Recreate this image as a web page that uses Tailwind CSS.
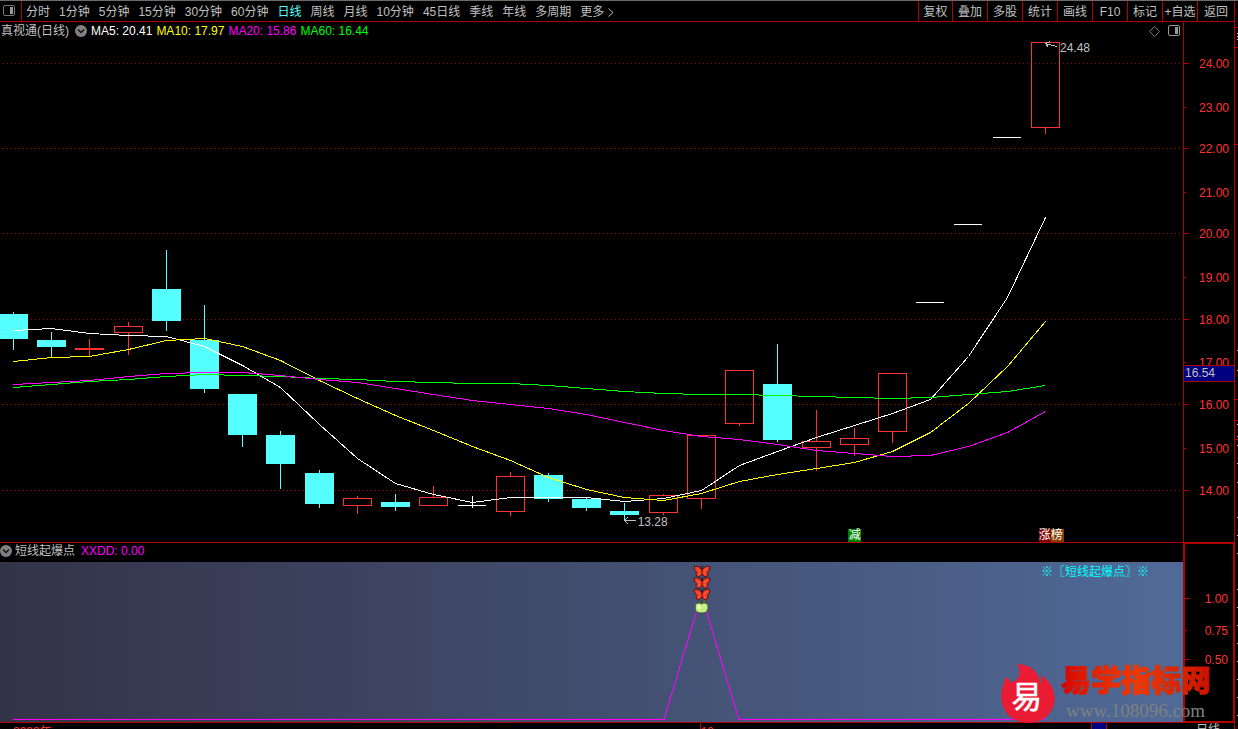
<!DOCTYPE html>
<html lang="zh-CN">
<head>
    <meta charset="UTF-8">
    <meta name="viewport" content="width=device-width, initial-scale=1.0">
    <title>真视通 日线</title>
    <script src="https://cdn.jsdelivr.net/npm/@tailwindcss/browser@4"></script>
</head>
<body class="bg-black text-[#c0c0c0] text-[12px] leading-[14px] font-['Liberation_Sans','Noto_Sans_CJK_SC',sans-serif]">
<div class="relative h-screen flex overflow-hidden border-t border-[#6b6b6b]">
    <div class="flex-1 min-w-0 flex flex-col">

        <!-- toolbar -->
        <header class="h-[21px] shrink-0 flex items-stretch border-b border-[#b00000] whitespace-nowrap">
            <button class="w-[22px] shrink-0 border-r border-[#b00000] flex items-center pl-[3px]" aria-label="面板">
                <svg class="w-3 h-3" viewBox="0 0 12 12" fill="none"><rect x="0.5" y="0.5" width="11" height="10" rx="1.5" stroke="#777"/><rect x="7" y="2" width="3" height="7" fill="#999"/></svg>
            </button>
            <nav class="flex-1 flex items-center gap-[9px] pl-1 pt-[2px]">
                <button>分时</button>
                <button>1分钟</button>
                <button>5分钟</button>
                <button>15分钟</button>
                <button>30分钟</button>
                <button>60分钟</button>
                <button class="text-[#55ffff]">日线</button>
                <button>周线</button>
                <button>月线</button>
                <button>10分钟</button>
                <button>45日线</button>
                <button>季线</button>
                <button>年线</button>
                <button>多周期</button>
                <button class="flex items-center gap-1">更多
                    <svg class="w-[6px] h-[9px]" viewBox="0 0 6 9" fill="none" stroke="#c0c0c0"><path d="M0.5 0.5L5 4.5L0.5 8.5"/></svg>
                </button>
            </nav>
            <div class="flex">
                <button class="w-[34px] pt-[2px] border-l border-[#b00000]">复权</button>
                <button class="w-[35px] pt-[2px] border-l border-[#b00000]">叠加</button>
                <button class="w-[35px] pt-[2px] border-l border-[#b00000]">多股</button>
                <button class="w-[35px] pt-[2px] border-l border-[#b00000]">统计</button>
                <button class="w-[35px] pt-[2px] border-l border-[#b00000]">画线</button>
                <button class="w-[35px] pt-[2px] border-l border-[#b00000]">F10</button>
                <button class="w-[35px] pt-[2px] border-l border-[#b00000]">标记</button>
                <button class="w-[35px] pt-[2px] border-l border-[#b00000]">+自选</button>
                <button class="w-[37px] pt-[2px] border-l border-[#b00000]">返回</button>
            </div>
        </header>

        <!-- K line -->
        <section class="flex-1 min-h-0 flex border-b border-[#b00000]">
            <div class="relative flex-1 min-w-0">
                <svg id="kline" class="absolute inset-0 w-full h-full" viewBox="0 22 1183 520" preserveAspectRatio="none" shape-rendering="crispEdges" fill="none"></svg>
                <div class="relative flex items-center pt-[2px] pl-px whitespace-nowrap">
                    <span>真视通(日线)</span>
                    <button class="ml-[6px] mr-1" aria-label="展开">
                        <svg class="w-3 h-3" viewBox="0 0 12 12" fill="none"><circle cx="6" cy="6" r="6" fill="#808080"/><path d="M3 4.5L6 7.5L9 4.5" stroke="#111" stroke-width="1.5"/></svg>
                    </button>
                    <div class="flex gap-1">
                        <span class="text-white">MA5: 20.41</span>
                        <span class="text-[#ffff00]">MA10: 17.97</span>
                        <span class="text-[#ff00ff]">MA20: 15.86</span>
                        <span class="text-[#00ff00]">MA60: 16.44</span>
                    </div>
                    <div class="ml-auto mr-[3px] flex items-center gap-2">
                        <svg class="w-[11px] h-[11px]" viewBox="0 0 11 11" fill="none"><path d="M5.5 0.5L10.5 5.5L5.5 10.5L0.5 5.5Z" stroke="#777"/></svg>
                        <svg class="w-3 h-3" viewBox="0 0 12 12" fill="none"><rect x="0.5" y="0.5" width="11" height="10" rx="1.5" stroke="#999"/><rect x="7" y="2" width="3" height="7" fill="#999"/></svg>
                    </div>
                </div>
                <span class="absolute left-[89.6%] top-[3.7%]">24.48</span>
                <span class="absolute left-[53.9%] top-[94.9%]">13.28</span>
                <span class="absolute left-[71.7%] bottom-0 w-[13px] text-center leading-[13px] bg-[#008000] text-white">减</span>
                <div class="absolute left-[87.8%] bottom-0 flex leading-[13px] text-white">
                    <span class="w-3 bg-[#800000]">涨</span>
                    <span class="w-[13px] bg-[#804000]">榜</span>
                </div>
            </div>
            <div class="relative w-[51px] shrink-0 border-l border-[#b00000] text-[#ff3232]">
                <div id="priceAxis"></div>
                <div class="absolute inset-x-0 top-[66%] h-[17px] border-y border-[#b00000] bg-[#000080] text-[#c0c0c0] pl-px leading-[15px]">16.54</div>
            </div>
        </section>

        <!-- indicator -->
        <section class="h-[180px] shrink-0 flex">
            <div class="flex-1 min-w-0 flex flex-col border-b border-[#b00000]">
                <div class="h-[19px] shrink-0 flex items-center whitespace-nowrap pb-[3px]">
                    <button class="mr-[3px]" aria-label="展开">
                        <svg class="w-3 h-3" viewBox="0 0 12 12" fill="none"><circle cx="6" cy="6" r="6" fill="#808080"/><path d="M3 4.5L6 7.5L9 4.5" stroke="#111" stroke-width="1.5"/></svg>
                    </button>
                    <span>短线起爆点</span>
                    <span class="ml-[6px] text-[#ff00ff]">XXDD: 0.00</span>
                </div>
                <div class="relative flex-1 bg-linear-to-r from-[#333348] to-[#506a98]">
                    <svg class="absolute inset-0 w-full h-full" viewBox="0 562 1183 160" preserveAspectRatio="none" shape-rendering="crispEdges" fill="none">
                        <path d="M13 719.5H664L697 610M706 610L739 719.5H1045" stroke="#ff00ff"/>
                    </svg>
                    <div class="absolute left-[59.3%] top-[3px] -translate-x-1/2">
                        <svg class="w-[18px] h-[49px]" viewBox="-1 0 18 49">
                            <defs>
                                <g id="butterfly">
                                    <path d="M0 1.5C3 0.5 6 2 7.5 4.5L8.5 4.5C10 2 13 0.5 16 1.5C16 4 15 6 13.5 7C14.5 9 13.500 11.500 12 12C10.500 12 9.500 10.500 8 9C6.500 10.500 5.500 12 4 12C2.500 11.500 1.500 9 2.500 7C1 6 0 4 0 1.500Z" fill="#f43c24" stroke="#3a0808" stroke-width="0.800"/>
                                    <path d="M3 3.5L6 6M13 3.5L10 6M5 9.500L6 7.5M11 9.500L10 7.5" stroke="#ff7250"/>
                                    <path d="M8 4V9M8 4L6.5 0.5M8 4L9.5 0.5" stroke="#3a0808" stroke-width="0.800"/>
                                </g>
                            </defs>
                            <use href="#butterfly"/>
                            <use href="#butterfly" y="11.5"/>
                            <use href="#butterfly" y="23"/>
                            <path d="M8 40L9 35.500" stroke="#202000"/>
                            <path d="M8.500 38C8.500 36 9.500 35 11 35C11 37 10 38 8.500 38Z" fill="#788000"/>
                            <path d="M7.500 39C5.500 37.500 1.200 37.500 1.200 42C1.200 46.500 4 48.500 7.500 47.800C11 48.500 14 46.500 14 42C14 37.500 9.500 37.500 7.500 39Z" fill="#c4f07c" stroke="#2c4420" stroke-width="0.700"/>
                            <path d="M3.500 42C4 39.500 7 40 7 42.500C7 45 3.500 45 3.500 42Z" fill="#f0ffc0"/>
                        </svg>
                    </div>
                    <span class="absolute left-[88%] top-[3px] whitespace-nowrap text-[#00ffff]">※〖短线起爆点〗※</span>
                </div>
            </div>
            <div class="relative w-[51px] shrink-0 border-t border-r border-b-2 border-l-2 border-[#b00000] text-[#ff3232]">
                <div id="signalAxis"></div>
            </div>
        </section>

        <!-- dates -->
        <footer class="relative h-[6px] shrink-0 overflow-hidden text-[#ff3232]">
            <span class="absolute left-[13px] top-[2px]">2023年</span>
            <span class="absolute left-[56.7%] top-0 border-l border-[#b00000] pt-[2px]">10</span>
            <span class="absolute left-[88.4%] top-0 w-[16px] h-full border-x border-[#b00000] bg-[#000080]"></span>
            <span class="absolute right-[14px] top-0 text-[#c0c0c0]">日线</span>
        </footer>
    </div>

    <!-- edge of the quote panel -->
    <aside class="w-1 shrink-0 border-l border-[#b00000]">
        <svg id="edge" class="w-full h-full" viewBox="0 1 3 728" preserveAspectRatio="none" shape-rendering="crispEdges"></svg>
    </aside>

    <!-- site mark -->
    <div class="absolute right-[27px] bottom-[6px] flex items-end gap-[6px]">
        <svg class="w-[54px] h-[59px]" viewBox="64 326 163 178">
            <path d="M112 327C150 325 182 352 182 388C186 380 187 370 184 360C212 375 227 405 226 432C224 475 190 503 146 503C100 503 67 475 65 428C64 405 72 385 78 366C86 370 92 374 93 382C105 378 118 372 120 355C121 344 118 335 112 327Z" fill="#ea1c34"/>
            <text x="142" y="458" text-anchor="middle" font-size="92" font-family="'Noto Sans CJK SC', sans-serif" fill="#fff" stroke="#fff" stroke-width="2">易</text>
        </svg>
        <div class="flex flex-col">
            <span class="text-[30px] leading-[35px] font-black bg-linear-to-r from-[#d80000] via-[#f03800] to-[#c81000] bg-clip-text text-transparent [-webkit-text-stroke:1px_transparent]">易学指标网</span>
            <a href="#" class="pl-[5px] text-[19px] leading-[25px] text-[#808080] font-['Liberation_Serif',serif]">www.108096.com</a>
        </div>
    </div>
</div>

<script>
    const NS = "http://www.w3.org/2000/svg";
    const UP = "#ff3232", DOWN = "#55ffff", FLAT = "#ffffff";

    function add(parent, tag, attrs) {
        let el = document.createElementNS(NS, tag);
        for (let k in attrs) el.setAttribute(k, attrs[k]);
        parent.appendChild(el);
    }

    // [center x, body top, body bottom, high, low, color]
    const candles = [
        [13, 314, 339, 312, 350, DOWN], [51, 340, 347, 332, 357, DOWN], [89, 348, 350, 339, 356, UP],
        [128, 326, 333, 322, 355, UP], [166, 289, 321, 250, 331, DOWN], [204, 340, 389, 305, 393, DOWN],
        [242, 394, 435, 394, 447, DOWN], [280, 435, 464, 431, 489, DOWN], [319, 473, 504, 470, 508, DOWN],
        [357, 498, 506, 496, 514, UP], [395, 502, 507, 494, 511, DOWN], [433, 497, 506, 486, 506, UP],
        [472, 505, 506, 496, 508, FLAT], [510, 476, 512, 472, 516, UP], [548, 475, 499, 473, 502, DOWN],
        [586, 499, 508, 497, 511, DOWN], [624, 511, 515, 503, 520, DOWN], [663, 495, 513, 494, 515, UP],
        [701, 435, 499, 435, 509, UP], [739, 370, 424, 370, 426, UP], [777, 384, 440, 344, 442, DOWN],
        [816, 441, 448, 410, 471, UP], [854, 438, 445, 428, 456, UP], [892, 373, 432, 373, 443, UP],
        [930, 302, 303, 302, 303, FLAT], [968, 224, 225, 224, 225, FLAT], [1007, 137, 138, 137, 138, FLAT],
        [1045, 42, 128, 42, 134, UP]
    ];

    const averages = {
        "#ffffff": [330, 328, 333, 335, 336, 346, 365, 387, 424, 458, 483, 494, 502, 497, 497, 497, 501, 498, 490, 465, 451, 437, 425, 413, 399, 356, 297, 217],
        "#ffff00": [361, 357, 356, 349, 340, 338, 346, 360, 380, 398, 415, 430, 446, 460, 477, 489, 497, 500, 493, 481, 474, 468, 462, 451, 432, 403, 366, 321],
        "#00ff00": [387, 384, 381, 379, 376, 374, 375, 376, 378, 379, 381, 382, 383, 383, 385, 388, 391, 393, 394, 394, 395, 396, 397, 398, 397, 394, 391, 385],
        "#ff00ff": [384, 382, 380, 376, 373, 372, 372, 375, 379, 382, 388, 394, 400, 404, 408, 414, 422, 430, 436, 439, 444, 450, 453, 456, 455, 446, 432, 411]
    };

    let kline = document.getElementById("kline");

    [63, 148, 233, 319, 404, 490].forEach(y => {
        add(kline, "path", { d: `M3 ${y + 0.5}H1183`, stroke: "#b00000", "stroke-dasharray": "1 3" });
    });

    candles.forEach(([x, top, bottom, high, low, color]) => {
        let left = x - 14;
        if (color === UP && bottom - top > 2) {
            add(kline, "rect", { x: left + 0.5, y: top + 0.5, width: 28, height: bottom - top - 1, stroke: color });
            if (high < top) add(kline, "rect", { x: x, y: high, width: 1, height: top - high, fill: color });
            if (low > bottom) add(kline, "rect", { x: x, y: bottom, width: 1, height: low - bottom, fill: color });
        } else {
            add(kline, "rect", { x: left, y: top, width: color === FLAT ? 28 : 29, height: bottom - top, fill: color });
            add(kline, "rect", { x: x, y: high, width: 1, height: low - high, fill: color });
        }
    });

    for (let color in averages) {
        let points = averages[color].map((y, i) => `${candles[i][0] + 0.5},${y + 0.5}`).join(" ");
        add(kline, "polyline", { points: points, stroke: color });
    }

    // high / low pointers
    add(kline, "path", { d: "M1045.5 43.5L1057 46.5M1045.5 43.5L1050 41.5M1045.5 43.5L1048 47", stroke: "#c0c0c0" });
    add(kline, "path", { d: "M624.5 520.5H636M624.5 520.5L628 517M624.5 520.5L628 524", stroke: "#c0c0c0" });

    function drawAxis(id, marks, start, height) {
        let axis = document.getElementById(id);
        marks.forEach(([label, y, major]) => {
            let pos = (y - start) / height * 100 + "%";
            let tick = document.createElement("i");
            tick.className = major ? "absolute left-0 h-px w-[5px] bg-[#b00000]" : "absolute left-0 h-px w-[2px] bg-[#b00000]";
            tick.style.top = pos;
            axis.appendChild(tick);
            let text = document.createElement("span");
            text.className = "absolute right-[5px] -translate-y-1/2 pt-px";
            text.style.top = pos;
            text.textContent = label;
            axis.appendChild(text);
        });
    }

    drawAxis("priceAxis", [
        ["24.00", 63, true], ["23.00", 107, false], ["22.00", 148, true], ["21.00", 192, false],
        ["20.00", 233, true], ["19.00", 277, false], ["18.00", 319, true], ["17.00", 362, false],
        ["16.00", 404, true], ["15.00", 448, false], ["14.00", 490, true]
    ], 22, 520);
    drawAxis("signalAxis", [["1.00", 598, true], ["0.75", 630, false], ["0.50", 659, true]], 544, 177);

    let edge = document.getElementById("edge");
    [27, 47, 144, 399, 420, 439].forEach(y => add(edge, "rect", { x: 0, y: y, width: 3, height: 1, fill: "#b00000" }));
    [33, 36, 39, 350, 370, 424, 436, 445, 463, 482, 517, 535, 553, 589, 607, 625, 643, 661, 679, 697, 715].forEach(y => {
        add(edge, "rect", { x: 2, y: y, width: 1, height: 1, fill: "#c0c0c0" });
    });
</script>
</body>
</html>
